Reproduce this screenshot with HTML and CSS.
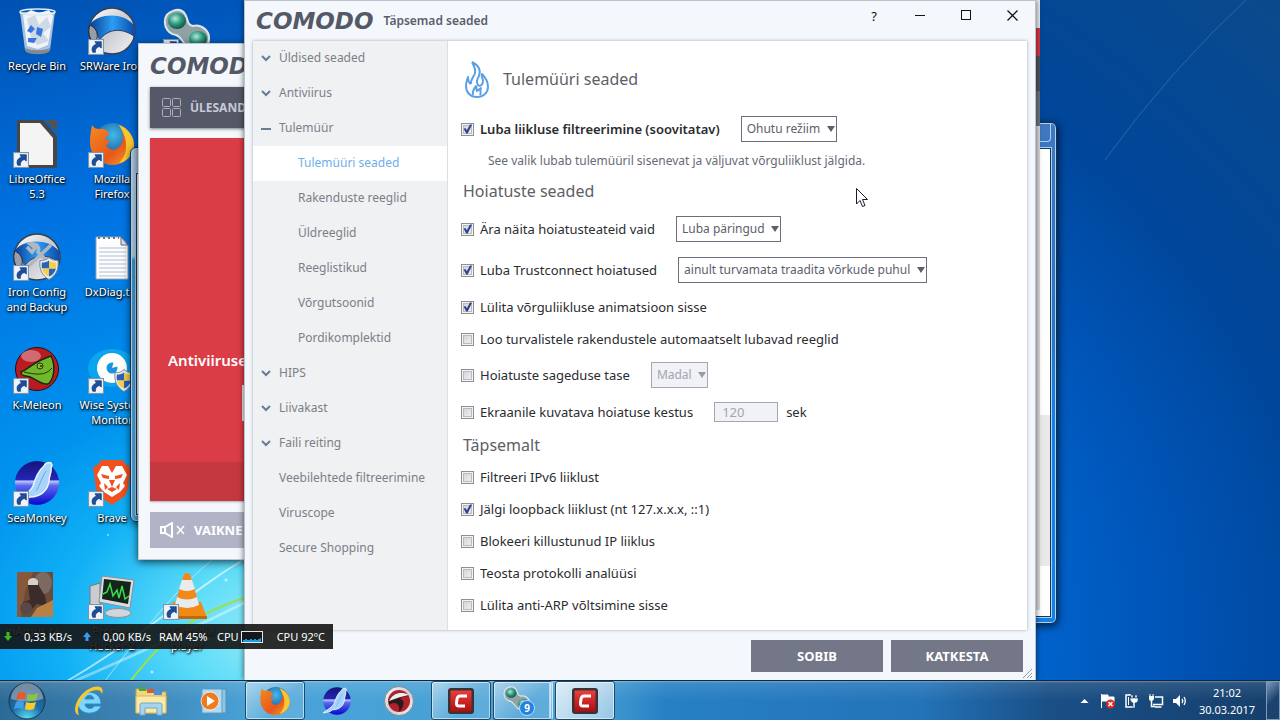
FILE: index.html
```html
<!DOCTYPE html>
<html lang="et">
<head>
<meta charset="utf-8">
<meta name="viewport" content="width=device-width, initial-scale=1">
<title>COMODO – Täpsemad seaded</title>
<link rel="stylesheet" href="styles.css">
</head>
<body>
<svg class="defs" width="0" height="0" aria-hidden="true">
  <defs>
    <linearGradient id="silver" x1="0" y1="0" x2="1" y2="1"><stop offset="0" stop-color="#fff"/><stop offset=".5" stop-color="#c9ccd2"/><stop offset="1" stop-color="#f4f4f6"/></linearGradient>
    <linearGradient id="blueband" x1="0" y1="0" x2="1" y2="0"><stop offset="0" stop-color="#0a3f96"/><stop offset=".5" stop-color="#2c9df4"/><stop offset="1" stop-color="#0b49a8"/></linearGradient>
    <radialGradient id="fxglobe" cx=".5" cy=".3" r=".7"><stop offset="0" stop-color="#43b9e8"/><stop offset="1" stop-color="#0a3a86"/></radialGradient>
    <linearGradient id="fxfur" x1="0" y1="0" x2="1" y2="1"><stop offset="0" stop-color="#f58a1f"/><stop offset=".6" stop-color="#e8561c"/><stop offset="1" stop-color="#f7a823"/></linearGradient>
    <radialGradient id="greenball" cx=".4" cy=".35" r=".7"><stop offset="0" stop-color="#b5ecd8"/><stop offset=".5" stop-color="#2f9a80"/><stop offset="1" stop-color="#0c4a40"/></radialGradient>
    <linearGradient id="smdisk" x1="0" y1="0" x2="0" y2="1"><stop offset="0" stop-color="#14147c"/><stop offset=".42" stop-color="#2424b4"/><stop offset=".46" stop-color="#b9c6ff"/><stop offset=".56" stop-color="#5a68f0"/><stop offset="1" stop-color="#0808c8"/></linearGradient>
    <linearGradient id="redtile" x1="0" y1="0" x2="0" y2="1"><stop offset="0" stop-color="#e8413c"/><stop offset="1" stop-color="#b00d12"/></linearGradient>
    <radialGradient id="orb" cx=".5" cy="1" r=".9"><stop offset="0" stop-color="#5fe0f5"/><stop offset=".5" stop-color="#1c6ea8"/><stop offset="1" stop-color="#28506f"/></radialGradient>

    <symbol id="i-shortcut" viewBox="0 0 15 15"><rect x=".5" y=".5" width="14" height="14" fill="#eef4fb" stroke="#8195a8"/><path d="M4.500 12.500C2.500 8.500 5 5.500 8 5L6.500 2.500H12.500V8.500L10.500 7C8 8 6.500 9.500 7 12.500Z" fill="#1c4f9c" stroke="#0d3270" stroke-width=".6"/></symbol>
    <symbol id="i-firefox" viewBox="0 0 48 48">
      <circle cx="25" cy="23" r="20" fill="url(#fxglobe)"/>
      <path d="M4 5C6 8 8 9 12 9C15 8 19 9 21 14C20 16 17 17 17 20C22 19 23 22 18 25C21 31 28 31 32 26C36 20 37 14 31 5C40 8 47 17 46 27C44 38 35 45 24 45C11 44 2 35 2 22C2 16 3 10 4 5Z" fill="url(#fxfur)"/>
      <path d="M31 5C40 8 47 17 46 27C44 36 38 42 31 43C39 36 42 22 31 5Z" fill="#fdd835" opacity=".85"/>
    </symbol>
    <symbol id="i-trillian" viewBox="0 0 48 48">
      <path d="M2 13C3 4 17 -1 22 7C26 13 23 17 30 19C39 17 47 24 46 33C45 43 34 46 25 40C19 36 19 30 13 28C6 27 1 21 2 13Z" fill="#8fa3a5" stroke="#dfe6e6" stroke-width="2"/>
      <ellipse cx="14" cy="14" rx="9" ry="8" fill="url(#greenball)"/><ellipse cx="35" cy="32" rx="9" ry="8" fill="url(#greenball)"/>
    </symbol>
    <symbol id="i-iron" viewBox="0 0 48 48">
      <circle cx="24" cy="24" r="23" fill="url(#silver)" stroke="#3a3f48" stroke-width="1.500"/>
      <path d="M2 17C10 7 34 4 46 18L47 30C36 21 20 20 11 34C10 28 6 22 2 17Z" fill="url(#blueband)"/>
      <path d="M2 18C-1 25 2 33 6 36C11 32 11 22 2 18Z" fill="#9a9da8" stroke="#23262e"/>
      <path d="M11 34C20 20 36 21 47 30" fill="none" stroke="#22395e"/>
    </symbol>
    <symbol id="i-shield" viewBox="0 0 20 22"><path d="M10 0C13 3 16 3 19 3C20 12 17 18 10 22C3 18 0 12 1 3C4 3 7 3 10 0Z" fill="#e8edf2" stroke="#7b8794"/><path d="M10 3V11H3C2.500 9 2.500 7 3 5C6 5 8 4.500 10 3ZM10 11H17C16 15 13 18 10 19Z" fill="#2a62b8"/><path d="M10 3C12 4.500 14 5 17 5C17.500 7 17.500 9 17 11H10ZM3 11H10V19C6 17.500 4 15 3 11Z" fill="#f4cf4a"/></symbol>
    <symbol id="i-seamonkey" viewBox="0 0 48 48">
      <circle cx="24" cy="24" r="22" fill="url(#smdisk)"/>
      <path d="M38 4C36 3 32 4 31 7C25 12 22 20 20 27C17 34 9 37 2 43C10 42 13 41 17 38C28 38 35 31 36 22C36 17 39 12 38 9L39 6Z" fill="#a8d4fa" stroke="#eaf6ff" stroke-width="1.500"/>
      <path d="M33 12C29 18 27 26 23 32" fill="none" stroke="#6ea6e8"/>
    </symbol>
    <symbol id="i-comodo" viewBox="0 0 28 28"><rect x="1" y="1" width="26" height="26" rx="3" fill="#3c3236"/><rect x="3.500" y="3.500" width="21" height="21" rx="1" fill="url(#redtile)"/><path d="M20 9H13C11 9 10.500 10 10 12L9.500 16C9.300 18 10 19 12 19H18" fill="none" stroke="#fff" stroke-width="3"/></symbol>
    <symbol id="i-chevron" viewBox="0 0 10 7"><path d="M1 1L5 5L9 1" fill="none" stroke="#647e96" stroke-width="2"/></symbol>
  </defs>
</svg>

<div class="desktop">
  <svg class="streaks" viewBox="0 0 1280 720" preserveAspectRatio="none" aria-hidden="true">
    <g fill="none" stroke="#fff">
      <path d="M60 685C140 640 190 590 250 556" stroke-width="2" opacity=".6"/><path d="M90 700C130 650 170 590 225 550" opacity=".5"/><path d="M70 683Q170 640 250 600" opacity=".4" stroke-width="3"/>
      <path d="M1105 160Q1170 70 1250 -4" opacity=".16"/>
    </g>
    <path d="M124 690C160 640 190 615 250 596" fill="none" stroke="#9be04c" stroke-width="2"/>
    <g fill="#fff" opacity=".6"><circle cx="226" cy="580" r="1.500"/><circle cx="152" cy="672" r="1.500"/><circle cx="108" cy="535" r="1"/><circle cx="215" cy="648" r="1"/></g>
  </svg>

  <ul class="icons">
    <li class="icon c1 r1">
      <svg viewBox="0 0 48 48"><path d="M7 5L12 43C15 47 34 47 37 43L42 5Z" fill="#b9cde0" opacity=".9"/><path d="M10 8L18 3L26 6L36 3L40 9L35 38L25 42L14 39Z" fill="#eef4fa"/><path d="M14 12L22 8L26 18L34 10L38 20L30 26L36 34L24 38L18 30Z" fill="#ced9e6"/><path d="M14 24L18 18L22 22L18 26ZM24 20L30 22L28 30L23 27ZM15 31L24 31L21 36L15 35Z" fill="#3b74dc"/><ellipse cx="24.500" cy="5" rx="17.500" ry="3" fill="none" stroke="#dfe8ef" stroke-width="1.500"/><path d="M12 41C18 44 31 44 37 41L36 45C30 48 19 48 13 45Z" fill="#83898f"/></svg>
      <span>Recycle Bin</span></li>
    <li class="icon c1 r2">
      <svg viewBox="0 0 48 48"><path d="M4 2Q4 0 6 0H30L44 16V46Q44 48 42 48H6Q4 48 4 46Z" fill="#484644"/><path d="M32 0H44V12Z" fill="#55524f"/><path d="M7 3H27L40 18V45H7Z" fill="#f4f4f4"/><use href="#i-shortcut" y="32" width="16" height="16"/></svg>
      <span>LibreOffice 5.3</span></li>
    <li class="icon c1 r3">
      <svg viewBox="0 0 48 48"><use href="#i-iron"/><path d="M14 14L19 19L22 15L17 11C24 10 27 15 25 19L34 28M38 12L18 31L14 34" fill="none" stroke="#aeb8c4" stroke-width="3.500"/><use href="#i-shield" x="26" y="24" width="20" height="23"/><use href="#i-shortcut" y="32" width="16" height="16"/></svg>
      <span>Iron Config and Backup</span></li>
    <li class="icon c1 r4">
      <svg viewBox="0 0 48 48"><circle cx="24" cy="23" r="21.500" fill="#b81c22" stroke="#2c0a0c"/><ellipse cx="18" cy="10" rx="10" ry="6" fill="#fff" opacity=".35"/><path d="M8 26C15 23 22 15 38 10C43 20 41 34 35 38C27 39 22 31 13 30C10 30 8 28 8 26Z" fill="#72b62b" stroke="#17290b" stroke-width="1.500"/><path d="M11 26C20 28 32 31 39 22" fill="none" stroke="#1c3a0b"/><circle cx="27" cy="20" r="3" fill="#8dbb34" stroke="#1c3a0b"/><circle cx="28" cy="20" r="1" fill="#1c3a0b"/><use href="#i-shortcut" y="32" width="16" height="16"/></svg>
      <span>K-Meleon</span></li>
    <li class="icon c1 r5">
      <svg viewBox="0 0 48 48"><use href="#i-seamonkey"/><use href="#i-shortcut" y="32" width="16" height="16"/></svg>
      <span>SeaMonkey</span></li>
    <li class="icon c1 r6">
      <svg viewBox="0 0 48 48"><rect x="4" y="0" width="36" height="45" fill="#6b4a36"/><path d="M4 0H20L12 20L8 45H4Z" fill="#87593a"/><ellipse cx="30" cy="11" rx="9" ry="11" fill="#7b6a62"/><path d="M15 14C14 8 26 6 26 14L32 24L34 34L24 32L16 40L8 40L10 30L17 28Z" fill="#3b2c2a"/><path d="M15 9C17 5 23 5 25 9V13H15Z" fill="#d7cfcb"/><circle cx="13" cy="36" r="6" fill="#594845"/><path d="M24 36L40 28V45H18Z" fill="#b98044"/></svg>
      <span>mArgus ca...</span></li>
    <li class="icon c2 r1"><svg viewBox="0 0 48 48"><use href="#i-iron"/><use href="#i-shortcut" y="32" width="16" height="16"/></svg><span>SRWare Iron</span></li>
    <li class="icon c2 r2"><svg viewBox="0 0 48 48"><use href="#i-firefox"/><use href="#i-shortcut" y="32" width="16" height="16"/></svg><span>Mozilla<br>Firefox</span></li>
    <li class="icon c2 r3">
      <svg viewBox="0 0 48 48"><path d="M8 4H33L40 12V46H8Z" fill="#fdfdfd" stroke="#9aa3ad"/><path d="M33 4V12H40Z" fill="#dde" stroke="#667"/><path d="M11 15H38M11 19H38M11 23H38M11 27H38M11 31H38M11 35H38M11 39H38M11 43H38" stroke="#a9bfd6"/><path d="M10 5H31" stroke="#777" stroke-width="2" stroke-dasharray="2 3"/></svg>
      <span>DxDiag.txt</span></li>
    <li class="icon c2 r4">
      <svg viewBox="0 0 48 48"><ellipse cx="24" cy="22" rx="24" ry="19" fill="#0aa5ee"/><circle cx="24" cy="22" r="15" fill="#fff"/><circle cx="24" cy="22" r="5.500" fill="#1596de"/><path d="M24 22L26 15L31 20Z" fill="#fff"/><use href="#i-shield" x="26" y="23" width="20" height="23"/><use href="#i-shortcut" y="32" width="16" height="16"/></svg>
      <span>Wise System Monitor</span></li>
    <li class="icon c2 r5">
      <svg viewBox="0 0 48 48"><path d="M14 1H34L39 6L43 8L40 30L37 37L24 46L11 37L8 30L5 8L9 6Z" fill="#f1501f"/><path d="M14 7H34L39 16L35 24L37 27L32 33L24 38L16 33L11 27L13 24L9 16Z" fill="#fff"/><path d="M13 15L21 17V20L15 19ZM35 15L27 17V20L33 19ZM21 21H27L24 28L29 30L24 33L19 30L24 28ZM16 24L20 28L17 31ZM32 24L28 28L31 31ZM20 7H28L24 14Z" fill="#f1501f"/><use href="#i-shortcut" y="32" width="16" height="16"/></svg>
      <span>Brave</span></li>
    <li class="icon c2 r6">
      <svg viewBox="0 0 48 48"><path d="M2 14L12 11V40L2 36Z" fill="#c9cdd2" stroke="#777"/><path d="M14 4L46 8L42 36L11 30Z" fill="#d9dde0" stroke="#8a8f94"/><path d="M16 7L43 10L40 32L14 27Z" fill="#14251a"/><path d="M15 22L19 20L22 12L25 24L29 18L31 26L34 14L37 27L41 24" fill="none" stroke="#35e04c" stroke-width="1.500"/><ellipse cx="30" cy="41" rx="13" ry="4.500" fill="#d2d6da" stroke="#8a8f94"/><use href="#i-shortcut" y="32" width="16" height="16"/></svg>
      <span>Process Hacker 2</span></li>
    <li class="icon c3 r1"><svg viewBox="0 0 48 48"><use href="#i-trillian"/><use href="#i-shortcut" y="32" width="16" height="16"/></svg></li>
    <li class="icon c3 r6">
      <svg viewBox="0 0 48 48"><path d="M10 30H38L44 46H2Z" fill="#f08a12"/><path d="M2 44H44V47H2Z" fill="#c9660a"/><path d="M21 2Q24 0 27 2L37 35Q24 42 11 35Z" fill="#f28a1a"/><path d="M19 8H29L32 17Q24 21 16 17ZM14 25Q24 30 34 25L36 33Q24 39 12 33Z" fill="#e9ecef"/><use href="#i-shortcut" y="32" width="16" height="16"/></svg>
      <span>VLC media player</span></li>
  </ul>

  <div class="aero aero-left"><div class="aero-body"></div></div>
  <div class="aero aero-right"><span class="aero-caption"></span><div class="aero-body"><span class="scroller"></span></div></div>
  <div class="strip"><span class="strip-red"></span><span class="strip-dark"></span><span class="strip-grey"></span></div>

  <section class="home" aria-label="COMODO">
    <div class="brand">COMODO</div>
    <div class="home-bar">
      <svg width="20" height="20" viewBox="0 0 20 20"><g fill="none" stroke="#a9acc4"><rect x=".5" y=".5" width="8" height="8" rx="1"/><rect x="10.500" y=".5" width="8" height="8" rx="1"/><rect x=".5" y="10.500" width="8" height="8" rx="1"/><rect x="10.500" y="10.500" width="8" height="8" rx="1"/></g></svg>
      <span>ÜLESANDED</span>
    </div>
    <div class="alert"><strong>Antiviiruse</strong><span class="alert-button"></span><div class="alert-foot"></div></div>
    <div class="silent">
      <svg width="26" height="16" viewBox="0 0 26 16"><path d="M1 5H5L12 1V15L5 11H1ZM5 5V11" fill="none" stroke="#fff" stroke-width="2"/><path d="M17 4L24 12M24 4L17 12" stroke="#fff" stroke-width="1.500"/></svg>
      <span>VAIKNE</span>
    </div>
  </section>

  <main class="dialog">
    <header class="titlebar">
      <div class="brand">COMODO</div>
      <h1>Täpsemad seaded</h1>
      <div class="controls">
        <button type="button" aria-label="Abi">?</button>
        <button type="button" aria-label="Minimeeri"><svg width="11" height="11"><path d="M0 5.500H10" stroke="#111"/></svg></button>
        <button type="button" aria-label="Maksimeeri"><svg width="11" height="11"><rect x=".5" y=".5" width="9" height="9" fill="none" stroke="#111"/></svg></button>
        <button type="button" aria-label="Sulge"><svg width="11" height="11"><path d="M.5 .5L10.500 10.500M10.500 .5L.5 10.500" stroke="#111" stroke-width="1.300"/></svg></button>
      </div>
    </header>

    <div class="panel">
      <nav class="side">
        <a href="#"><svg class="mark"><use href="#i-chevron"/></svg>Üldised seaded</a>
        <a href="#"><svg class="mark"><use href="#i-chevron"/></svg>Antiviirus</a>
        <a href="#"><svg class="mark" viewBox="0 0 10 7"><path d="M0 4H10" stroke="#647e96" stroke-width="2"/></svg>Tulemüür</a>
        <a href="#" class="sub current" aria-current="page">Tulemüüri seaded</a>
        <a href="#" class="sub">Rakenduste reeglid</a>
        <a href="#" class="sub">Üldreeglid</a>
        <a href="#" class="sub">Reeglistikud</a>
        <a href="#" class="sub">Võrgutsoonid</a>
        <a href="#" class="sub">Pordikomplektid</a>
        <a href="#"><svg class="mark"><use href="#i-chevron"/></svg>HIPS</a>
        <a href="#"><svg class="mark"><use href="#i-chevron"/></svg>Liivakast</a>
        <a href="#"><svg class="mark"><use href="#i-chevron"/></svg>Faili reiting</a>
        <a href="#" class="leaf">Veebilehtede filtreerimine</a>
        <a href="#" class="leaf">Viruscope</a>
        <a href="#" class="leaf">Secure Shopping</a>
      </nav>

      <form class="content" id="settings">
        <div class="page-title">
          <svg width="24" height="37" viewBox="0 0 24 37"><path d="M7 1C9 5 11 8 10 12C9 16 5 19 6 23M7 1C13 4 16 9 14 15C12 18 11 21 13 24C15 26 18 24 18 20C18 17 16 16 17 13C21 17 23 21 23 26C23 32 18 36 12 36C5 36 1 31 1 25C1 21 2 19 3 16C3 19 3 22 6 23M8 34C7 30 9 28 11 25C12 27 11 29 12 30L16 27C14 31 17 31 15 34" fill="none" stroke="#5b9fe6" stroke-width="2" stroke-linejoin="round"/></svg>
          <h2>Tulemüüri seaded</h2>
        </div>
        <div class="row tall">
          <label class="strong"><input type="checkbox" checked>Luba liikluse filtreerimine (soovitatav)</label>
          <span class="pick"><select aria-label="Filtreerimise režiim"><option>Ohutu režiim</option></select></span>
        </div>
        <p class="hint">See valik lubab tulemüüril sisenevat ja väljuvat võrguliiklust jälgida.</p>
        <h3 class="group roomy">Hoiatuste seaded</h3>
        <div class="row tall">
          <label><input type="checkbox" checked>Ära näita hoiatusteateid vaid</label>
          <span class="pick"><select aria-label="Hoiatusteadete toiming"><option>Luba päringud</option></select></span>
        </div>
        <div class="row tall">
          <label><input type="checkbox" checked>Luba Trustconnect hoiatused</label>
          <span class="pick"><select aria-label="Trustconnect"><option>ainult turvamata traadita võrkude puhul</option></select></span>
        </div>
        <div class="row"><label><input type="checkbox" checked>Lülita võrguliikluse animatsioon sisse</label></div>
        <div class="row"><label><input type="checkbox">Loo turvalistele rakendustele automaatselt lubavad reeglid</label></div>
        <div class="row tall">
          <label><input type="checkbox">Hoiatuste sageduse tase</label>
          <span class="pick off"><select aria-label="Sageduse tase" disabled><option>Madal</option></select></span>
        </div>
        <div class="row">
          <label><input type="checkbox">Ekraanile kuvatava hoiatuse kestus</label>
          <label class="seconds"><input type="text" value="120" disabled>sek</label>
        </div>
        <h3 class="group">Täpsemalt</h3>
        <div class="row"><label><input type="checkbox">Filtreeri IPv6 liiklust</label></div>
        <div class="row"><label><input type="checkbox" checked>Jälgi loopback liiklust (nt 127.x.x.x, ::1)</label></div>
        <div class="row"><label><input type="checkbox">Blokeeri killustunud IP liiklus</label></div>
        <div class="row"><label><input type="checkbox">Teosta protokolli analüüsi</label></div>
        <div class="row"><label><input type="checkbox">Lülita anti-ARP võltsimine sisse</label></div>
      </form>
    </div>

    <footer class="actions">
      <button type="submit" form="settings">SOBIB</button>
      <button type="button">KATKESTA</button>
      <svg class="grip" width="9" height="9"><path d="M0 9L9 0M4 9L9 4M7 9L9 7" stroke="#8f99a6"/></svg>
    </footer>
  </main>

  <div class="monitor">
    <svg class="arrow" width="8" height="9"><path d="M2.500 0H5.500V4H8L4 9L0 4H2.500Z" fill="#3fb51f"/></svg><span class="rate">0,33 KB/s</span>
    <svg class="arrow" width="8" height="9"><path d="M2.500 9H5.500V5H8L4 0L0 5H2.500Z" fill="#3d97f2"/></svg><span class="rate">0,00 KB/s</span>
    <span class="ram">RAM 45%</span>
    <span>CPU</span>
    <svg class="graph" width="22" height="12"><rect x=".5" y=".5" width="21" height="11" fill="#15181a" stroke="#e4e6e8"/><path d="M2 11V9H4V8H6V9H9V8H11V9H13V8H15V9H17V8H19V7H20V11Z" fill="#1f9be0"/></svg>
    <span>CPU 92ºC</span>
  </div>

  <svg class="cursor" width="12" height="20" viewBox="0 0 12 20"><path d="M.5 .5V16L4 12.500L6.500 18.500L9 17.500L6.500 11.500H11.500Z" fill="#fff" stroke="#1b1b2e"/></svg>

  <footer class="taskbar">
    <button type="button" class="start" aria-label="Start"><svg width="38" height="38" viewBox="0 0 38 38"><circle cx="19" cy="19" r="18" fill="url(#orb)" stroke="#173650"/><path d="M3 17A16 16 0 0 1 35 17Q19 22 3 17Z" fill="#fff" opacity=".35"/><path d="M10 11Q14 9 18 11L17 18Q13 16 8 18Z" fill="#e8592a"/><path d="M20 12Q25 14 30 11L28 18Q23 20 19 18Z" fill="#8cc63f"/><path d="M8 20Q12 18 16 20L15 27Q11 25 6 27Z" fill="#3f9fe8"/><path d="M18 20Q23 22 28 20L26 27Q21 29 17 27Z" fill="#fbc928"/></svg></button>
    <button type="button" class="task" aria-label="Internet Explorer"><svg width="32" height="32" viewBox="0 0 32 32"><path d="M28 19H12C12 24 20 25 21 21H28C25 31 5 31 5 18C5 4 28 3 28 19ZM12 14H21C20 9 13 9 12 14Z" fill="#7fd6fa" stroke="#2793d4"/><path d="M6 30C-2 29 3 12 14 5C24 -1 32 1 29 9C28 4 22 4 15 8C7 14 3 24 6 30Z" fill="#f8c72c"/></svg></button>
    <button type="button" class="task" aria-label="Explorer"><svg width="34" height="32" viewBox="0 0 34 32"><path d="M2 4H12L14 7H32V28H2Z" fill="#f4d67c" stroke="#c8a24a"/><path d="M5 2H12V6H5Z" fill="#4ba64a"/><path d="M13 4H20V8H13Z" fill="#d65a42"/><path d="M20 6H28V10H20Z" fill="#4a8fd8"/><path d="M2 11H32V28H2Z" fill="#fbe9a8" stroke="#d8b660"/><path d="M6 30V20Q6 18 8 18H26Q28 18 28 20V30H23V23H11V30Z" fill="#a6d4ec" stroke="#6fa8c8"/></svg></button>
    <button type="button" class="task" aria-label="Media Player"><svg width="30" height="30" viewBox="0 0 30 30"><path d="M8 3H28V27H8Z" fill="#8fc4e4" stroke="#4f8fb8"/><path d="M4 3H24V27H4Z" fill="#b4daf0" stroke="#5f9fc8"/><circle cx="12" cy="15" r="9" fill="#f07a1c" stroke="#fff" stroke-width=".7"/><path d="M9 10L17 15L9 20Z" fill="#fff"/></svg></button>
    <button type="button" class="task open" aria-label="Firefox"><svg width="32" height="32"><use href="#i-firefox"/></svg></button>
    <button type="button" class="task" aria-label="SeaMonkey"><svg width="30" height="30"><use href="#i-seamonkey"/></svg></button>
    <button type="button" class="task" aria-label="Comodo Dragon"><svg width="32" height="32" viewBox="0 0 32 32"><circle cx="16" cy="16" r="14.500" fill="url(#silver)" stroke="#888"/><circle cx="16" cy="16" r="11" fill="#b3202c"/><path d="M6 15C10 8 18 6 26 11C21 11 18 12 17 14C22 15 22 21 16 27C17 21 15 18 11 18C9 18 7 19 6 20Z" fill="#2b1a1c"/><path d="M6 16C10 8 18 6 26 10C20 11 14 13 6 16Z" fill="#eee"/></svg></button>
    <button type="button" class="task open" aria-label="Comodo"><svg width="28" height="28"><use href="#i-comodo"/></svg></button>
    <button type="button" class="task open stacked" aria-label="Trillian"><svg width="34" height="32" viewBox="0 0 34 32"><use href="#i-trillian" width="30" height="28"/><circle cx="25" cy="23" r="7.500" fill="#2384e0" stroke="#b9dcf8"/><text x="25" y="27" text-anchor="middle" class="count">9</text></svg></button>
    <button type="button" class="task open active" aria-label="Comodo seaded"><svg width="28" height="28"><use href="#i-comodo"/></svg></button>

    <div class="tray">
      <svg width="16" height="16"><path d="M4.500 10L8.500 6L12.500 10Z" fill="#fff"/></svg>
      <svg width="16" height="16"><path d="M1.500 1V15M2 2H8V4H14V9H8V8H2Z" fill="#fff" stroke="#fff"/><circle cx="10.500" cy="11" r="4.500" fill="#e0281c"/><path d="M8.500 9L12.500 13M12.500 9L8.500 13" stroke="#fff" stroke-width="1.500"/></svg>
      <svg width="16" height="16"><path d="M7 2H2V14H9M5 2V1" fill="none" stroke="#fff" stroke-width="1.500"/><path d="M4.500 4V12" stroke="#fff"/><path d="M6 5H14V8Q13 10 11 10V15H9V10Q6 9 6 5ZM7 2H9V5H7ZM11 2H13V5H11Z" fill="#fff" stroke="#173f6c" stroke-width=".5"/></svg>
      <svg width="16" height="16"><path d="M7 4H14.500V11.500H5M7 14H13.500M3.500 7V13.500H7" fill="none" stroke="#fff" stroke-width="1.500"/><path d="M1 3H6V6Q5 8 3.500 8Q1 8 1 6ZM1.500 1H2.500V3H1.500ZM4.500 1H5.500V3H4.500Z" fill="#fff"/></svg>
      <svg width="16" height="16"><path d="M1 6H4L8 2V14L4 10H1Z" fill="#fff"/><path d="M10 6Q11.500 8 10 10M12 4Q14.500 8 12 12" fill="none" stroke="#fff" stroke-width="1.300"/></svg>
    </div>
    <time class="clock" datetime="2017-03-30T21:02"><span>21:02</span><span>30.03.2017</span></time>
    <button type="button" class="peek" aria-label="Näita töölauda"></button>
  </footer>
</div>
</body>
</html>
```

FILE: styles.css
```css
* { box-sizing: border-box; }

body {
  margin: 0;
  font-family: "Noto Sans", "Open Sans", sans-serif;
  font-size: 13px;
  line-height: 16px;
}

button, select, input { font: inherit; color: inherit; }
button { padding: 0; border: 0; background: none; }
svg { display: block; flex: none; }
h1, h2, h3, p, ul { margin: 0; padding: 0; font-weight: 400; }
.defs { position: absolute; }

.desktop {
  position: relative;
  height: 100vh;
  min-height: 720px;
  overflow: hidden;
  background: radial-gradient(ellipse 1000px 720px at 280px 630px, #9cecf8 0, #5cdcf8 10%, #10b0f6 22%, #0092ee 34%, #0072e2 62%, #0055b8 88%, #00469a 105%, #0b4a8a 135%);
}
.streaks { position: absolute; inset: 0; width: 100%; height: 100%; }

/* Desktop shortcuts */
.icons {
  position: absolute;
  top: 7px;
  left: 0;
  display: grid;
  grid-template-columns: repeat(3, 75px);
  grid-template-rows: repeat(6, 113px);
  list-style: none;
}
.icon {
  width: 74px;
  display: flex;
  flex-direction: column;
  align-items: center;
  gap: 3px;
  font-size: 11px;
  line-height: 15px;
  color: #fff;
  text-align: center;
  text-shadow: 1px 1px 2px #000, 0 1px 3px #000;
}
.icon svg { width: 48px; height: 48px; }
.c1 { grid-column: 1; } .c2 { grid-column: 2; } .c3 { grid-column: 3; }
.r1 { grid-row: 1; } .r2 { grid-row: 2; } .r3 { grid-row: 3; }
.r4 { grid-row: 4; } .r5 { grid-row: 5; } .r6 { grid-row: 6; }

/* Glass windows in the background */
.aero {
  position: absolute;
  padding: 25px 5px 6px;
  border: 1px solid #16324f;
  border-radius: 6px;
  box-shadow: inset 0 0 0 1px #a9d3f2, 1px 2px 8px rgba(0, 0, 0, .7);
}
.aero-body {
  height: 100%;
  display: flex;
  justify-content: flex-end;
  align-items: flex-end;
  padding-bottom: 50px;
  border: 1px solid #12395e;
  outline: 1px solid #a9d3f2;
  background: #fff;
}
.aero-left { left: 130px; top: 147px; width: 400px; height: 375px; background: linear-gradient(#a9c4dc 0, #a9c4dc 29%, #3f8cc4 30%, #4ba4d6); }
.aero-right { right: 223px; top: 122px; width: 400px; height: 502px; background: linear-gradient(#4078c0, #2f74c4 40%, #1580ea 60%); }
.aero-caption { position: absolute; top: 0; right: 5px; width: 60px; height: 19px; border: 1px solid #a9d3f2; border-top: 0; border-radius: 0 0 4px 4px; }
.scroller { width: 10px; height: 151px; background: #e9e9e9; }
.strip {
  position: absolute;
  top: 0;
  right: 240px;
  width: 300px;
  height: 610px;
  padding-top: 28px;
  display: flex;
  flex-direction: column;
  background: linear-gradient(#e8edf0 0, #e8edf0 20%, #dcdcdc 21%);
}
.strip-red { height: 28px; background: #d63a44; }
.strip-dark { height: 35px; background: #50535f; }
.strip-grey { height: 35px; background: #6f7382; }

.brand {
  font-family: "DejaVu Sans", sans-serif;
  font-size: 23px;
  line-height: 24px;
  font-weight: 700;
  font-style: italic;
  color: #555867;
}

/* Main Comodo window */
.home {
  position: absolute;
  left: 138px;
  top: 43px;
  width: 500px;
  height: 517px;
  padding: 10px 11px;
  display: flex;
  flex-direction: column;
  border: 1px solid #c0c8d0;
  background: #f4f8fc;
  box-shadow: 0 2px 8px rgba(0, 0, 0, .7);
}
.home-bar {
  height: 41px;
  margin-top: 9px;
  padding-left: 12px;
  display: flex;
  align-items: center;
  gap: 8px;
  background: #555867;
  box-shadow: 0 1px 3px rgba(0, 0, 0, .5);
  font-size: 12px;
  font-weight: 700;
  color: #c6c9d8;
}
.alert {
  height: 363px;
  margin-top: 10px;
  display: flex;
  flex-direction: column;
  background: #db3d47;
  box-shadow: 0 1px 2px rgba(0, 0, 0, .3);
  color: #fff;
}
.alert strong { margin: 212px 0 0 18px; font-size: 15px; line-height: 20px; font-weight: 600; }
.alert-button { margin: 15px 0 0 92px; height: 36px; background: #e8e8ea; }
.alert-foot { height: 39px; margin-top: auto; background: #c63840; }
.silent {
  height: 36px;
  margin-top: 11px;
  padding-left: 10px;
  display: flex;
  align-items: center;
  gap: 8px;
  background: #b1b4c6;
  font-weight: 700;
  color: #fff;
}

/* Settings dialog */
.dialog {
  position: absolute;
  inset: 0 244px 40px 244px;
  display: flex;
  flex-direction: column;
  padding: 0 8px;
  border: 1px solid #b9c3cc;
  border-bottom: 0;
  background: #f4f8fc;
  box-shadow: 0 0 6px rgba(0, 0, 0, .6);
}
.titlebar { height: 40px; display: flex; align-items: center; gap: 10px; padding-left: 3px; }
.titlebar h1 { font-size: 12px; font-weight: 600; color: #5b5e6c; }
.controls { display: flex; align-self: flex-start; margin: 0 -8px 0 auto; }
.controls button { width: 46px; height: 29px; display: flex; align-items: center; justify-content: center; color: #111; }
.panel { flex: 1; display: flex; box-shadow: 0 0 3px rgba(70, 90, 110, .5); }
.side { width: 195px; flex: none; background: #eff1f3; border-right: 1px solid #dcdfe2; font-size: 12px; }
.side a { height: 35px; padding: 0 0 1px 8px; display: flex; align-items: center; gap: 8px; color: #7b7f87; text-decoration: none; }
.side .leaf { padding-left: 26px; }
.side .sub { padding-left: 45px; }
.side .current { background: #fff; color: #6faeea; }
.mark { width: 10px; height: 7px; }

.content { flex: 1; padding-left: 13px; background: #fff; color: #2a2c30; }
.page-title { height: 68px; padding: 8px 0 0 4px; display: flex; align-items: center; gap: 14px; }
.page-title h2, .group { font-size: 16px; line-height: 20px; color: #5e6066; }
.row { height: 32px; display: flex; align-items: center; gap: 21px; }
.tall { height: 41px; padding-bottom: 1px; }
.row label { display: flex; align-items: center; gap: 6px; }
.strong { font-weight: 600; }
.hint { padding-left: 27px; font-size: 12px; line-height: 22px; color: #666a76; }
.group { height: 33px; padding-left: 2px; display: flex; align-items: center; }
.roomy { height: 37px; }

input[type="checkbox"] {
  appearance: none;
  width: 13px;
  height: 13px;
  margin: 0;
  border: 1px solid #8e8f8f;
  background: linear-gradient(135deg, #cbcfd5, #f6f6f6);
  box-shadow: inset 0 0 0 1px #f4f4f4, inset 0 0 0 2px #b8bcc2;
}
input[type="checkbox"]:checked::after {
  content: "";
  display: block;
  width: 11px;
  height: 11px;
  background: #31438f;
  clip-path: polygon(15% 48%, 32% 42%, 44% 62%, 72% 8%, 92% 8%, 52% 92%, 38% 92%);
}

.pick { position: relative; }
.pick::after {
  content: "";
  position: absolute;
  right: 2px;
  top: 10px;
  border: 4px solid transparent;
  border-top: 6px solid #5d606c;
  border-bottom: 0;
  pointer-events: none;
}
.pick select {
  display: block;
  appearance: none;
  height: 26px;
  padding: 0 15px 0 5px;
  border: 1px solid #6b6e7d;
  border-radius: 0;
  background: #fff;
  color: #5d606c;
  font-size: 12px;
}
.pick.off::after { border-top-color: #9a9ca2; }
.pick.off select { border-color: #a5a7b0; background: #f1f2f8; color: #a3a5ab; opacity: 1; }
.row .seconds { gap: 8px; }
.seconds input { width: 64px; height: 20px; padding: 0 7px; border: 1px solid #a5a7b0; background: #f1f2f8; color: #a3a5ab; }

.actions { position: relative; height: 50px; display: flex; align-items: center; justify-content: flex-end; gap: 8px; padding: 2px 4px 0 0; }
.actions button { width: 132px; height: 32px; background: #737787; color: #fff; font-weight: 700; }
.grip { position: absolute; right: -5px; bottom: 2px; }

/* Resource monitor overlay */
.monitor {
  position: absolute;
  left: 0;
  bottom: 71px;
  width: 333px;
  height: 25px;
  padding-left: 4px;
  display: flex;
  align-items: center;
  background: rgba(20, 20, 20, .9);
  font-size: 11px;
  color: #fff;
}
.arrow { margin-right: 12px; }
.rate { width: 59px; }
.rate + .ram { width: 58px; margin-left: -3px; }
.graph { margin: 0 14px 0 2px; }

.cursor { position: absolute; left: 856px; top: 188px; }

/* Taskbar */
.taskbar {
  position: absolute;
  inset: auto 0 0 0;
  height: 40px;
  display: flex;
  gap: 2px;
  border-top: 1px solid #12283f;
  background: linear-gradient(rgba(255, 255, 255, .35) 0, rgba(255, 255, 255, .1) 2px, transparent 20px), linear-gradient(90deg, #2c6a96 0, #3c83b4 10%, #49a3d8 20%, #48a0d4 46%, #2780c4 52%, #2373b8 72%, #1a4f86 82%, #153f6c);
}
.start { width: 57px; padding: 1px 0 0 8px; }
.task { width: 60px; height: 39px; display: flex; align-items: center; justify-content: center; }
.open { border: 1px solid #1d4a6c; border-radius: 3px; box-shadow: inset 0 0 0 1px rgba(255, 255, 255, .55); background: linear-gradient(135deg, rgba(255, 255, 255, .5), rgba(255, 255, 255, .12) 60%); }
.stacked { border-right: 3px double #cfe6f5; padding-right: 6px; }
.active { background: linear-gradient(135deg, rgba(255, 255, 255, .8), rgba(255, 255, 255, .45)); }
.count { font-size: 10px; font-weight: 700; fill: #fff; }
.tray { margin-left: auto; display: flex; align-items: center; gap: 8px; }
.clock { width: 74px; display: flex; flex-direction: column; justify-content: center; align-items: center; font-size: 11px; line-height: 17px; color: #fff; }
.peek { width: 14px; border: 1px solid #7f9ab8; background: linear-gradient(135deg, #7d9aba, #1c4370 50%); }
```
